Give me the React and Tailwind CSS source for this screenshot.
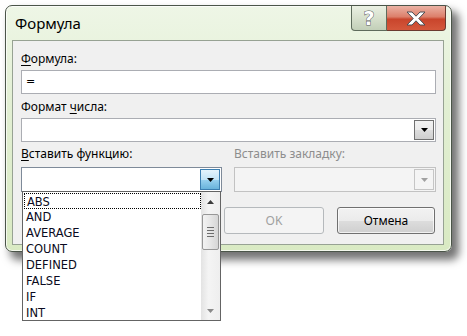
import { useState } from 'react';

const FUNCS = ['ABS', 'AND', 'AVERAGE', 'COUNT', 'DEFINED', 'FALSE', 'IF', 'INT'];

function Arrow({ color = '#000' }) {
  return (
    <svg width="7" height="4" viewBox="0 0 7 4">
      <path d="M0 0H7L3.5 4Z" fill={color} />
    </svg>
  );
}

function ComboButton({ active, disabled }) {
  const tone = active
    ? 'border-[#3c7fb1] bg-[linear-gradient(180deg,#e5f4fc_0%,#c4e5f6_50%,#98d1ef_51%,#68b3db_100%)]'
    : disabled
      ? 'border-[#c5c5c5] bg-[#f4f4f4]'
      : 'border-[#707070] bg-[linear-gradient(180deg,#f2f2f2_0%,#ebebeb_50%,#dddddd_51%,#cfcfcf_100%)]';
  return (
    <div className={`w-[20px] my-[1px] mr-[1px] border flex items-center justify-center ${tone}`}>
      <Arrow color={disabled ? '#a0a0a0' : '#000'} />
    </div>
  );
}

function Label({ children, disabled }) {
  return (
    <div className={`h-[16px] leading-[16px] text-[12px] ${disabled ? 'text-[#8d8d8d]' : 'text-black'}`}>
      {children}
    </div>
  );
}

function FunctionList() {
  return (
    <div className="absolute left-0 top-full w-full h-[130px] border border-[#646464] bg-white flex z-10">
      <div className="flex-1 pt-[1px] pl-[1px] font-['DejaVu_Sans',sans-serif] text-[11.5px] text-[#0a0a20]">
        {FUNCS.map((f, i) => (
          <div
            key={f}
            className={`h-[16px] leading-[16px] pl-[2px] ${i === 0 ? 'border border-dotted border-black pl-[1px] leading-[14px]' : ''}`}
          >
            {f}
          </div>
        ))}
      </div>
      <div className="w-[19px] bg-[linear-gradient(90deg,#e3e3e3,#f4f4f4_40%,#eeeeee)] flex flex-col items-center">
        <div className="h-[19px] flex items-center justify-center">
          <svg width="7" height="4" viewBox="0 0 7 4"><path d="M3.5 0L7 4H0Z" fill="#3c3c3c" /></svg>
        </div>
        <div className="mt-[3px] w-[17px] h-[36px] rounded-[2px] border border-[#979797] bg-[linear-gradient(90deg,#f3f3f3,#e6e6e6_50%,#d6d6d6)] flex flex-col items-center justify-center gap-[2px]">
          <div className="w-[7px] h-[1px] bg-[#6d6d6d]" />
          <div className="w-[7px] h-[1px] bg-[#6d6d6d]" />
          <div className="w-[7px] h-[1px] bg-[#6d6d6d]" />
          <div className="w-[7px] h-[1px] bg-[#6d6d6d]" />
        </div>
        <div className="flex-1" />
        <div className="h-[19px] flex items-center justify-center">
          <svg width="7" height="4" viewBox="0 0 7 4"><path d="M0 0H7L3.5 4Z" fill="#8a8a8a" /></svg>
        </div>
      </div>
    </div>
  );
}

export default function App() {
  const [value] = useState('=');

  return (
    <div className="w-[467px] h-[336px] bg-white overflow-hidden pl-[5px] pt-[5px] font-['Noto_Sans',sans-serif]">
      <div className="relative w-[447px] h-[247px] rounded-[7px] border border-[#4b5549] bg-[linear-gradient(180deg,#eef6e6_0%,#e2efd3_40%,#d9eac3_100%)] shadow-[6px_7px_9px_1px_rgba(0,0,0,0.55),inset_0_0_0_1px_rgba(255,255,255,0.7)]">
        {/* title bar */}
        <div className="h-[34px] pl-[9px] pt-[7px] text-[15px] leading-[20px] text-black">Формула</div>

        <div className="absolute top-0 right-[5px] flex h-[25px]">
          <div className="w-[36px] h-full border border-t-0 border-[#5e6b5c] rounded-bl-[4px] bg-[linear-gradient(180deg,#eaf0e3_0%,#d7e0cd_50%,#c2cfb8_100%)] flex items-center justify-center">
            <span className="font-['DejaVu_Sans',sans-serif] font-bold text-[19px] leading-[22px] text-white [-webkit-text-stroke:1px_#555b60] [paint-order:stroke_fill]">
              ?
            </span>
          </div>
          <div className="w-[59px] h-full border border-t-0 border-l-0 border-[#6b3a30] rounded-br-[4px] bg-[linear-gradient(180deg,#eab2a4_0%,#dc7f6a_45%,#c9452c_55%,#d4583c_100%)] flex items-center justify-center">
            <svg width="22" height="15" viewBox="0 0 22 15">
              <path
                d="M2 1H7L11 5.2L15 1H20L13.8 7.5L20 14H15L11 9.8L7 14H2L8.2 7.5Z"
                fill="#ffffff"
                stroke="#4a4f55"
                strokeWidth="1"
                strokeLinejoin="round"
              />
            </svg>
          </div>
        </div>

        {/* client area */}
        <div className="ml-[6px] w-[432px] h-[205px] border border-[#97a293] bg-[#f0f0f0] pl-[8px] pr-[7px] pt-[10px] text-[12px]">
          <Label>
            <span className="underline underline-offset-2">Ф</span>ормула:
          </Label>
          <div className="mt-[3px] h-[24px] border border-[#abadb3] bg-white pl-[4px] leading-[22px] font-['DejaVu_Sans',sans-serif] text-[11px]">
            {value}
          </div>

          <div className="mt-[5px]">
            <Label>
              Формат <span className="underline underline-offset-2">ч</span>исла:
            </Label>
          </div>
          <div className="mt-[3px] h-[24px] border border-[#abadb3] bg-white flex">
            <div className="flex-1" />
            <ComboButton />
          </div>

          <div className="mt-[4px] flex gap-[12px]">
            <div className="w-[201px] flex flex-col">
              <Label>
                <span className="underline underline-offset-2">В</span>ставить функцию:
              </Label>
              <div className="relative mt-[5px] h-[25px] border border-[#7e8a99] bg-white flex">
                <div className="flex-1" />
                <ComboButton active />
                <FunctionList />
              </div>
            </div>
            <div className="flex-1 flex flex-col">
              <Label disabled>Вставить закладку:</Label>
              <div className="mt-[5px] h-[25px] border border-[#c2c2c2] bg-[#f4f4f4] flex">
                <div className="flex-1" />
                <ComboButton disabled />
              </div>
            </div>
          </div>

          <div className="mt-[15px] flex justify-end gap-[13px] pr-[1px]">
            <div className="w-[100px] h-[27px] rounded-[3px] border border-[#b5b9bc] bg-[#f4f4f4] flex items-center justify-center text-[12px] text-[#a0a0a0]">
              OK
            </div>
            <div className="w-[98px] h-[27px] rounded-[3px] border border-[#707070] bg-[linear-gradient(180deg,#f2f2f2_0%,#ebebeb_50%,#dddddd_51%,#cfcfcf_100%)] shadow-[inset_0_0_0_1px_rgba(255,255,255,0.7)] flex items-center justify-center text-[12px] text-black">
              Отмена
            </div>
          </div>
        </div>
      </div>
    </div>
  );
}
